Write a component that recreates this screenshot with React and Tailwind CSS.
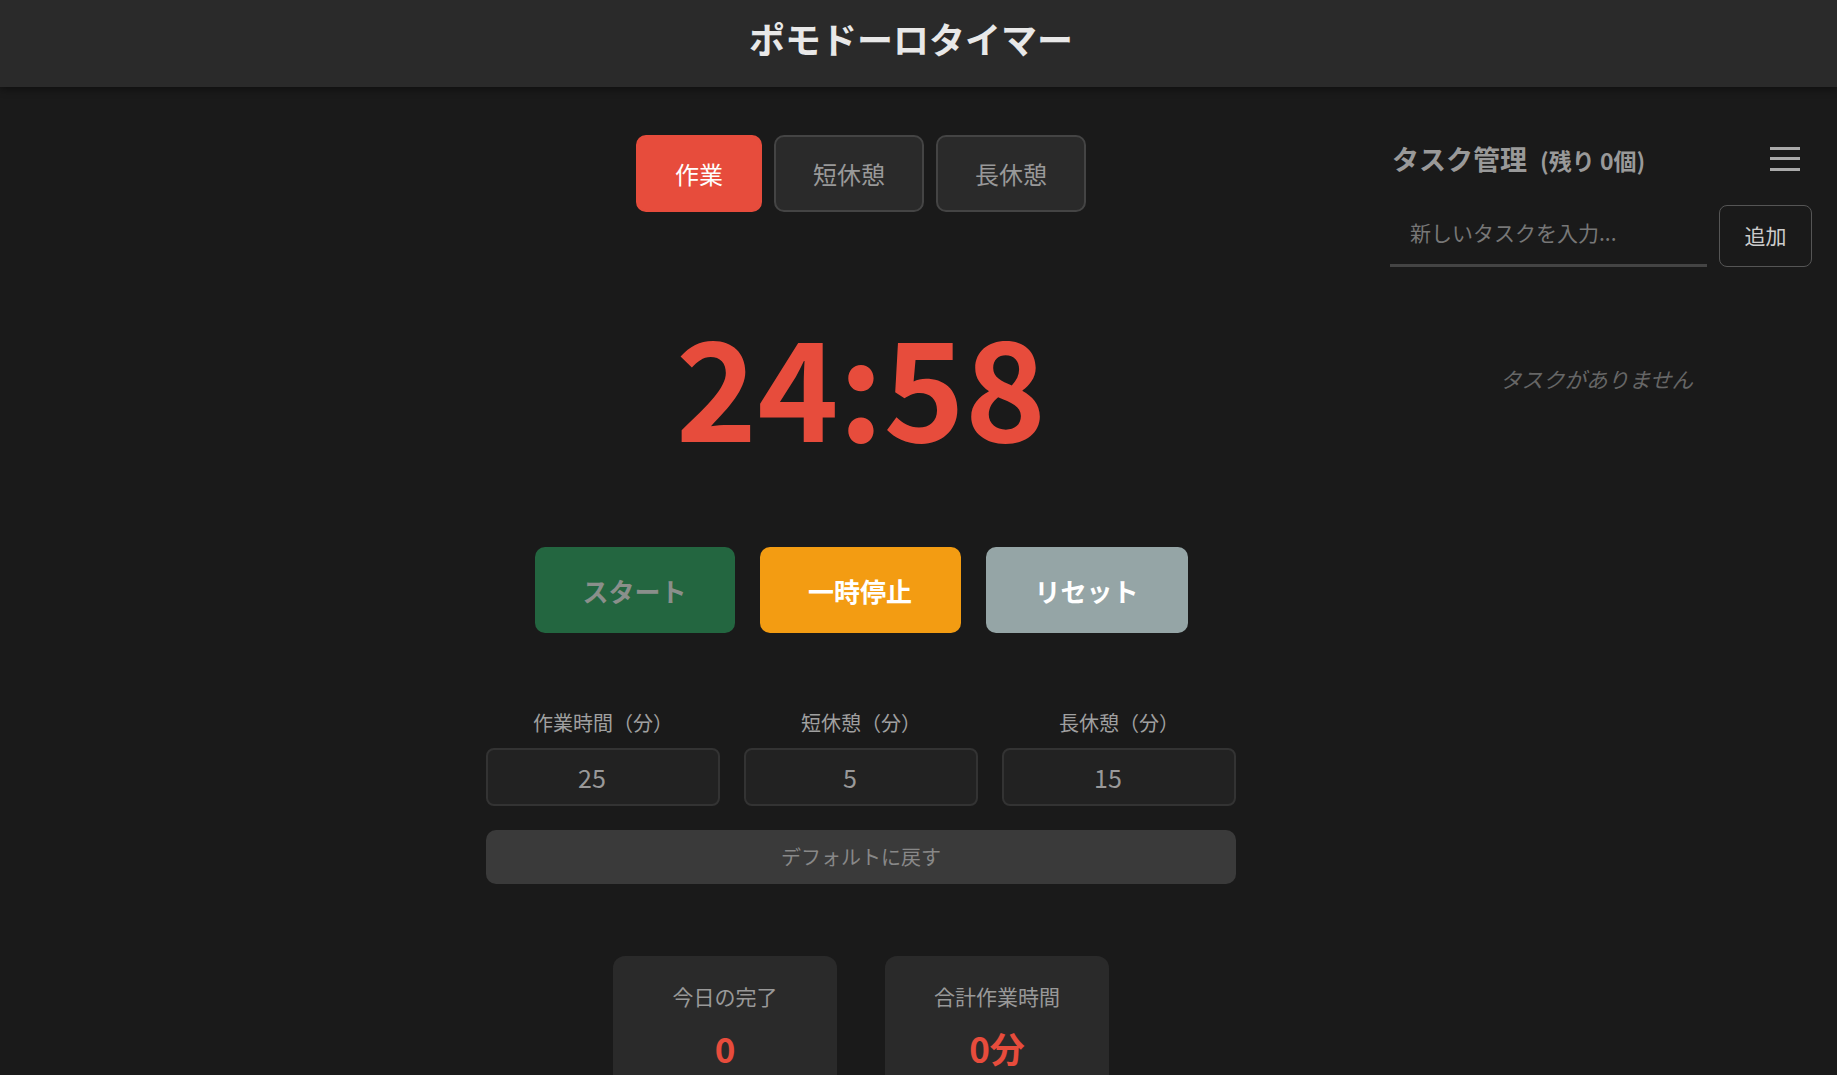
import React from "react";

const font = { fontFamily: '"Noto Sans CJK JP", "Noto Sans", sans-serif' };

function ModeButton({ active, children }) {
  return (
    <button
      className={
        active
          ? "h-[77px] px-[37px] rounded-[10px] border-2 border-[#e74c3c] bg-[#e74c3c] text-white text-[24px] leading-none"
          : "h-[77px] px-[37px] rounded-[10px] border-2 border-[#444444] bg-[#2a2a2a] text-[#999999] text-[24px] leading-none"
      }
    >
      {children}
    </button>
  );
}

function Setting({ label, value }) {
  return (
    <div className="flex flex-col items-center">
      <div className="mt-[2px] text-[20px] leading-none text-[#a0a0a0] h-[20px]">{label}</div>
      <input
        type="number"
        readOnly
        value={value}
        className="mt-[15px] w-full h-[58px] rounded-[8px] border-2 border-[#333333] bg-[#222222] pr-[7px] text-center text-[25px] text-[#999999] outline-none"
      />
    </div>
  );
}

function Stat({ label, value }) {
  return (
    <div className="w-[224px] h-[140px] rounded-[12px] bg-[#2a2a2a] flex flex-col items-center pt-[30px]">
      <div className="text-[21px] leading-none text-[#999999]">{label}</div>
      <div className="mt-[23px] text-[35px] leading-none font-bold text-[#e74c3c]">{value}</div>
    </div>
  );
}

export default function App() {
  return (
    <div className="min-h-screen bg-[#1a1a1a] overflow-hidden" style={font}>
      <header className="h-[87px] bg-[#2a2a2a] shadow-[0_2px_8px_rgba(0,0,0,0.45)] flex justify-center pt-[20px] pr-[15px] relative z-10">
        <h1 className="text-[36px] leading-none font-bold text-[#e8e8e8]">ポモドーロタイマー</h1>
      </header>

      <div className="flex">
        <main className="ml-[486px] w-[750px] flex flex-col items-center">
          <div className="mt-[48px] flex gap-[12px]">
            <ModeButton active>作業</ModeButton>
            <ModeButton>短休憩</ModeButton>
            <ModeButton>長休憩</ModeButton>
          </div>

          <div className="mt-[101px] text-[138px] leading-none font-bold text-[#e74c3c] h-[138px]">
            24:58
          </div>

          <div className="mt-[96px] flex gap-[25px]">
            <button className="w-[200px] h-[86px] rounded-[10px] bg-[#236640] text-[#8a8f8b] text-[26px] font-bold">
              スタート
            </button>
            <button className="w-[201px] h-[86px] rounded-[10px] bg-[#f39c12] text-white text-[26px] font-bold">
              一時停止
            </button>
            <button className="w-[202px] h-[86px] rounded-[10px] bg-[#95a5a6] text-white text-[26px] font-bold">
              リセット
            </button>
          </div>

          <div className="mt-[78px] w-full grid grid-cols-3 gap-[24px]">
            <Setting label="作業時間（分）" value="25" />
            <Setting label="短休憩（分）" value="5" />
            <Setting label="長休憩（分）" value="15" />
          </div>

          <button className="mt-[24px] w-full h-[54px] rounded-[10px] bg-[#3a3a3a] text-[20px] text-[#888888]">
            デフォルトに戻す
          </button>

          <div className="mt-[72px] flex gap-[48px]">
            <Stat label="今日の完了" value="0" />
            <Stat label="合計作業時間" value="0分" />
          </div>
        </main>

        <aside className="ml-auto mr-[25px] w-[422px]">
          <div className="mt-[58px] flex items-center justify-between">
            <h2 className="text-[27px] leading-none font-bold text-[#999999] pl-[2px]">
              タスク管理
              <span className="ml-[13px] text-[23px]">(残り 0個)</span>
            </h2>
            <button className="mr-[12px] flex flex-col gap-[7.5px]" aria-label="menu">
              <span className="block w-[30px] h-[3px] bg-[#aaaaaa]"></span>
              <span className="block w-[30px] h-[3px] bg-[#aaaaaa]"></span>
              <span className="block w-[30px] h-[3px] bg-[#aaaaaa]"></span>
            </button>
          </div>

          <div className="mt-[33px] flex gap-[12px]">
            <input
              type="text"
              placeholder="新しいタスクを入力..."
              className="flex-1 min-w-0 h-[62px] bg-transparent border-b-[3px] border-[#444444] pl-[20px] pb-[5px] text-[21px] text-[#cccccc] placeholder:text-[#777777] outline-none"
            />
            <button className="w-[93px] h-[62px] rounded-[8px] border border-[#555555] text-[21px] text-[#cccccc]">
              追加
            </button>
          </div>

          <p className="mt-[101px] pr-[9px] text-center italic text-[21.5px] leading-none text-[#666666]">
            タスクがありません
          </p>
        </aside>
      </div>
    </div>
  );
}
